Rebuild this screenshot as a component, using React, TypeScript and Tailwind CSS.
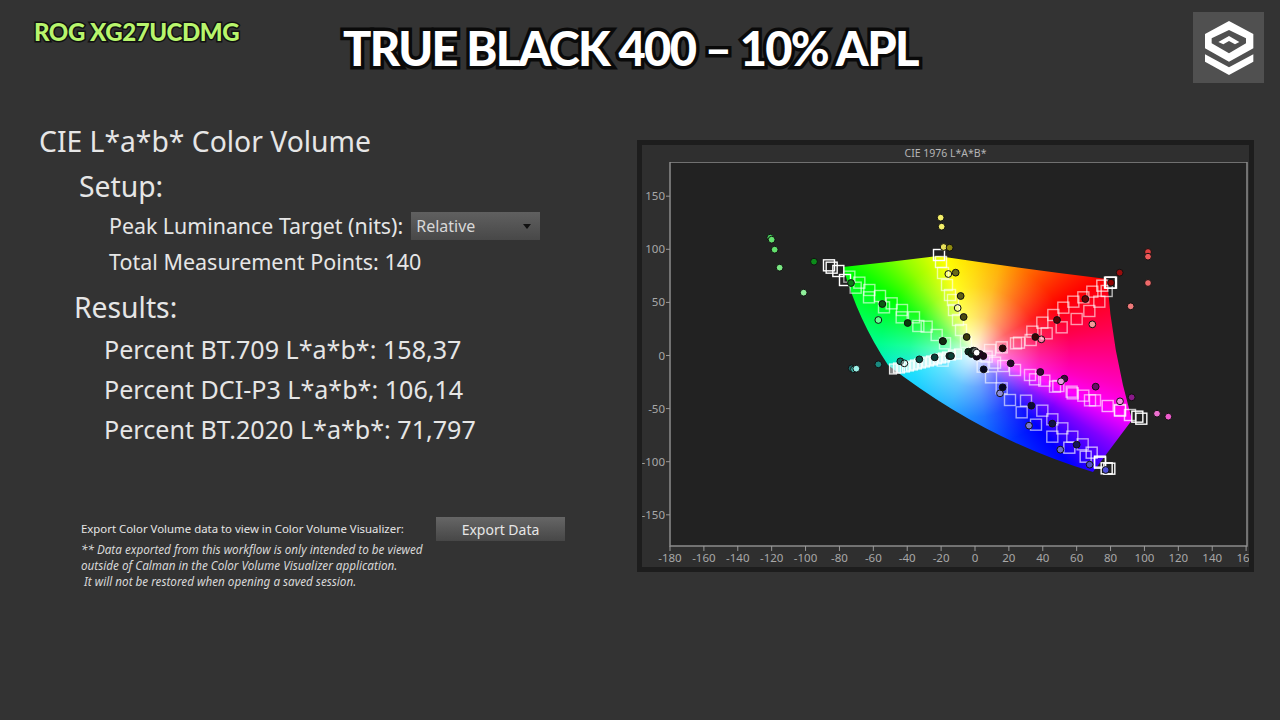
type Dot = [number, number, string, boolean?];
type Sq = [number, number, number?];

const fromZoom = (ox: number, oy: number, x: number, y: number): [number, number] => [ox + x / 3, oy + y / 3];

// squares, read off the plot in page pixels
const squares: Sq[] = [
  // green
  ...([[597,391,1],[605,398,1],[625,408,1],[645,435,1],[658,425,0.7],[688,443,0.7],[677,458,0.7],[718,465,0.7],[717,487,0.7],[750,483,0.7],[785,505,0.7],[762,517,0.7],[816,525,0.7],[815,547,0.7],[852,547,0.7],[865,573,0.7],[890,575,0.7],[920,600,0.7],[945,625,0.7]] as number[][]).map(([x, y, o]) => [...fromZoom(630, 135, x, y), o] as Sq),
  // yellow
  [939, 255, 1], [941, 262, 0.9], [943, 273, 0.7], [947, 285, 0.7], [950, 295, 0.7], [953, 300, 0.7], [954, 310, 0.7], [958, 320, 0.7], [961, 330, 0.7], [966, 342, 0.6],
  // red
  ...([[513,443,1],[510,443,1],[500,468,0.8],[487,452,0.8],[457,470,0.7],[430,487,0.7],[478,500,0.7],[400,500,0.7],[370,518,0.7],[448,528,0.7],[340,540,0.7],[307,563,0.7],[410,552,0.7],[365,577,0.7],[320,595,0.7],[277,590,0.7],[272,615,0.7],[237,623,0.7],[228,625,0.7],[185,637,0.7],[150,645,0.7]] as number[][]).map(([x, y, o]) => [...fromZoom(940, 135, x, y), o] as Sq),
  // magenta
  ...([[604,236,1],[592,230,1],[570,225,0.85],[540,212,0.8],[540,210,0.8],[503,198,0.8],[465,181,0.7],[450,181,0.7],[430,167,0.7],[398,160,0.7],[395,155,0.7],[345,140,0.7],[355,138,0.7],[313,122,0.7],[285,118,0.7],[270,105,0.7],[225,90,0.7],[190,78,0.7],[165,68,0.7],[140,50,0.7]] as number[][]).map(([x, y, o]) => [...fromZoom(940, 340, x, y), o] as Sq),
  // blue
  ...([[508,386,1],[500,385,1],[480,365,1],[480,368,1],[455,338,0.8],[437,350,0.8],[428,313,0.7],[388,323,0.8],[397,290,0.7],[337,290,0.7],[367,265,0.7],[337,238,0.7],[307,212,0.7],[288,254,0.7],[258,182,0.7],[245,217,0.7],[210,180,0.7],[185,145,0.7],[153,112,0.7],[128,80,0.7],[8,62,0.7]] as number[][]).map(([x, y, o]) => [...fromZoom(940, 340, x, y), o] as Sq),
];

// the cyan run is squeezed together, so it gets smaller boxes
const cyanRun: [number, number][] = [[893,369],[897,368],[901,368],[906,367],[910,366],[914,365],[918,364],[922,363],[926,362],[930,361],[934,360],[938,359],[942,358],[946,357],[952,355],[958,354]];

const dots: Dot[] = [
  ...([[421,308,"#49d85f"],[425,314,"#63e06d"],[434,344,"#63e06d"],[449,398,"#7be884"],[521,473,"#8fee9a"],[552,380,"#0c8c1a"],[663,444,"#0d7a15"],[757,507,"#0a5a10"],[833,564,"#063e0a"],[745,555,"#5fd03c",true],[938,618,"#052a05"],[932,248,"#f5f06a"],[935,275,"#f5f06a"],[941,336,"#e7df5a"]] as [number,number,string,boolean?][]).map(([x, y, c, h]) => [...fromZoom(630, 135, x, y), c, h] as Dot),
  ...([[665,85,"#1f6b6b"],[672,88,"#3fb5a8"],[679,86,"#9ef0e8"],[745,73,"#1a8a80"],[811,64,"#136e63"],[823,70,"#2fa08f",true],[868,58,"#0a5148"],[914,52,"#083e38"],[958,48,"#062f2b"]] as [number,number,string,boolean?][]).map(([x, y, c, h]) => [...fromZoom(630, 340, x, y), c, h] as Dot),
  ...([[29,338,"#8f8a10"],[47,413,"#6b6b18"],[25,417,"#b8b820",true],[62,483,"#5f5f15"],[53,519,"#c8c850",true],[71,546,"#4a4a10"],[80,606,"#3a3a0a"],[9,619,"#102a10"],[624,351,"#e04040"],[624,365,"#ee5a5a"],[624,444,"#ee6a6a"],[572,514,"#ee7a7a"],[539,413,"#990d0d"],[513,443,"#8c0000"],[436,492,"#6a0505"],[457,568,"#f59a9a"],[351,555,"#550505"],[286,606,"#3a0505"],[304,613,"#e85050",true],[188,640,"#2a0505"]] as [number,number,string,boolean?][]).map(([x, y, c, h]) => [...fromZoom(940, 135, x, y), c, h] as Dot),
  ...([[685,230,"#ee5ccc"],[651,221,"#ee70d0"],[575,172,"#8a1a8a"],[540,184,"#f090e0"],[467,140,"#6a0a6a"],[373,116,"#450545"],[363,124,"#ee99e6"],[301,96,"#350535"],[212,70,"#25052a"],[130,48,"#200520"],[497,390,"#4f4fd8"],[449,374,"#5050c0"],[410,314,"#15155a"],[361,329,"#6c6cc8"],[337,251,"#10104a"],[267,257,"#7a7ad0"],[274,197,"#0a0a3a"],[180,160,"#8a8ad8"],[188,142,"#05052a"],[131,88,"#050520"],[33,48,"#0a4038"],[85,35,"#0a2a20"],[95,42,"#0a2a20"],[110,50,"#100818"],[120,42,"#200520"],[100,32,"#0a2a20"],[105,33,"#d0f0d0",true],[110,38,"#ffffff"]] as [number,number,string,boolean?][]).map(([x, y, c, h]) => [...fromZoom(940, 340, x, y), c, h] as Dot),
];

const xTicks = [-180,-160,-140,-120,-100,-80,-60,-40,-20,0,20,40,60,80,100,120,140];
const yTicks = [150,100,50,0,-50,-100,-150];
const xPos = (a: number) => 975 + a * 1.6945;
const yPos = (b: number) => 355.5 - b * 1.062;

function Chart() {
  return (
    <div className="w-[617px] h-[432px] border-[5px] border-[#1d1d1d] bg-[#2f2f2f] flex flex-col">
      <div className="h-[17px] flex items-center justify-center text-[10.5px] text-[#b5b5b5] font-['Noto_Sans',sans-serif]">CIE 1976 L*A*B*</div>
      <svg width="607" height="405" viewBox="642 162 607 405" className="block">
        <defs>
          <clipPath id="gamut">
            <path d="M843,267 Q890,262 938,256 Q1018,268 1107,279 Q1112,350 1132,420 L1093,472 Q985,440 888,365 Q858,320 843,267 Z" />
          </clipPath>
        </defs>
        <rect x="670" y="162" width="577" height="384" fill="#222222" stroke="#8c8c8c" strokeWidth="1.5" />
        <foreignObject x="830" y="240" width="320" height="245" clipPath="url(#gamut)">
          <div className="w-[320px] h-[245px] bg-[radial-gradient(circle_at_145px_112px,rgba(255,255,255,1)_0px,rgba(255,255,255,0.8)_10px,rgba(255,255,255,0.4)_35px,rgba(255,255,255,0.12)_65px,rgba(255,255,255,0)_95px),conic-gradient(from_0deg_at_145px_112px,#ffd800_0deg,#ffb000_16deg,#ff8000_28deg,#ff3000_48deg,#ff0000_60deg,#ff0050_80deg,#ff00c0_103deg,#ff00ff_113deg,#8000ff_124deg,#0000ff_140deg,#0060ff_172deg,#00a0ff_205deg,#00d8ff_250deg,#00ff90_275deg,#00ff00_303deg,#90ff00_322deg,#ffff00_342deg,#ffd800_360deg)]" />
        </foreignObject>
        {squares.map(([x, y, o], i) => (
          <rect key={i} x={x - 5.5} y={y - 5.5} width="11" height="11" fill="none" stroke="#ffffff" strokeOpacity={o === 1 ? 1 : (o ?? 0.7) * 0.85} strokeWidth="1.4" />
        ))}
        {cyanRun.map(([x, y], i) => (
          <rect key={i} x={x - 3.5} y={y - 5} width="7" height="10" fill="#ffffff" fillOpacity="0.45" stroke="#ffffff" strokeOpacity="0.85" strokeWidth="1.2" />
        ))}
        {dots.map(([x, y, c, hollow], i) => (
          <circle key={i} cx={x} cy={y} r={3.4} fill={hollow ? "#ffffff" : c} fillOpacity={hollow ? 0.4 : 1} stroke="#111111" strokeWidth="1" />
        ))}
        {yTicks.map((b) => (
          <g key={b}>
            <line x1="666" x2="670" y1={yPos(b)} y2={yPos(b)} stroke="#9a9a9a" strokeWidth="1" />
            <text x="665" y={yPos(b) + 4} textAnchor="end" fontSize="11.5" fill="#a8a8a8" fontFamily="'Noto Sans', sans-serif">{b}</text>
          </g>
        ))}
        {[...xTicks, 160].map((a) => (
          <line key={a} x1={xPos(a)} x2={xPos(a)} y1="546" y2="551" stroke="#9a9a9a" strokeWidth="1" />
        ))}
        {xTicks.map((a) => (
          <text key={a} x={xPos(a)} y="562" textAnchor="middle" fontSize="11.5" fill="#a8a8a8" fontFamily="'Noto Sans', sans-serif">{a}</text>
        ))}
        <text x="1243" y="562" textAnchor="middle" fontSize="11.5" fill="#a8a8a8" fontFamily="'Noto Sans', sans-serif">16</text>
      </svg>
    </div>
  );
}

function Logo() {
  return (
    <div className="w-[71px] h-[71px] mt-[12px] mr-[16px] ml-auto bg-[#505050] shrink-0">
      <svg width="71" height="71" viewBox="9 6 213 213" className="block">
        <path fill="#ffffff" fillRule="evenodd" d="M117,33 L190,72 L190,115 L117,155 L45,115 L45,72 Z M117,60 L65,85 L65,100 L117,130 L168,100 L168,85 Z" />
        <path fill="#ffffff" d="M117,78 L148,96 L135,103 L117,93 L100,103 L85,96 Z" />
        <path fill="#ffffff" d="M45,133 L117,172 L190,133 L190,155 L117,195 L45,155 Z" />
      </svg>
    </div>
  );
}

export default function App() {
  return (
    <div className="w-[1280px] h-[720px] overflow-hidden bg-[#333333] text-[#e6e6e6] font-['Noto_Sans',sans-serif]">
      {/* Header */}
      <div className="h-[120px] flex items-start">
        <div className="w-[206px] ml-[34px] mt-[17px] whitespace-nowrap text-[24px] leading-[30px] tracking-[-0.45px] font-black text-[#b8f56c] font-['Lato',sans-serif] [-webkit-text-stroke:3px_#111111] [paint-order:stroke_fill]">ROG XG27UCDMG</div>
        <div className="ml-[103px] mt-[18px] whitespace-nowrap text-[47px] leading-[60px] tracking-[-1.7px] font-black text-white font-['Lato',sans-serif] [-webkit-text-stroke:7px_#0a0a0a] [paint-order:stroke_fill]">TRUE BLACK 400 – 10% APL</div>
        <Logo />
      </div>

      <div className="flex items-start">
        {/* Left column */}
        <div className="w-[637px] shrink-0 flex flex-col">
          <div className="h-10 ml-[39px] mt-[1px] flex items-center text-[28.3px]">CIE L*a*b* Color Volume</div>
          <div className="h-10 ml-[79px] mt-[5px] flex items-center text-[28.3px]">Setup:</div>
          <div className="h-[28px] ml-[109px] mt-[6px] flex items-center gap-[8px] text-[21.35px]">
            <span>Peak Luminance Target (nits):</span>
            <div className="w-[129px] h-[28px] pl-[5px] pr-[9px] flex items-center justify-between bg-gradient-to-b from-[#606060] to-[#484848] text-[16px] text-[#d8d8d8]">
              <span>Relative</span>
              <span className="w-0 h-0 border-x-[4px] border-x-transparent border-t-[5px] border-t-[#111111]" />
            </div>
          </div>
          <div className="h-[30px] ml-[109px] mt-[7px] flex items-center text-[21.5px]">Total Measurement Points: 140</div>
          <div className="h-10 ml-[74px] mt-[10px] flex items-center text-[28.3px]">Results:</div>
          <div className="h-10 ml-[104px] mt-[3px] flex items-center text-[25.1px]">Percent BT.709 L*a*b*: 158,37</div>
          <div className="h-10 ml-[104px] flex items-center text-[25.1px]">Percent DCI-P3 L*a*b*: 106,14</div>
          <div className="h-10 ml-[104px] flex items-center text-[25.1px]">Percent BT.2020 L*a*b*: 71,797</div>
          <div className="h-[24px] ml-[81px] mt-[67px] flex items-center text-[11.4px]">
            <span className="w-[355px]">Export Color Volume data to view in Color Volume Visualizer:</span>
            <div className="w-[129px] h-[24px] flex items-center justify-center bg-gradient-to-b from-[#666666] to-[#474747] text-[14px]">Export Data</div>
          </div>
          <div className="ml-[81px] text-[11.7px] leading-[16px] italic text-[#d8d8d8] whitespace-pre">
            <div>** Data exported from this workflow is only intended to be viewed</div>
            <div>outside of Calman in the Color Volume Visualizer application.</div>
            <div> It will not be restored when opening a saved session.</div>
          </div>
        </div>

        {/* Plot */}
        <div className="mt-[20px]">
          <Chart />
        </div>
      </div>
    </div>
  );
}
